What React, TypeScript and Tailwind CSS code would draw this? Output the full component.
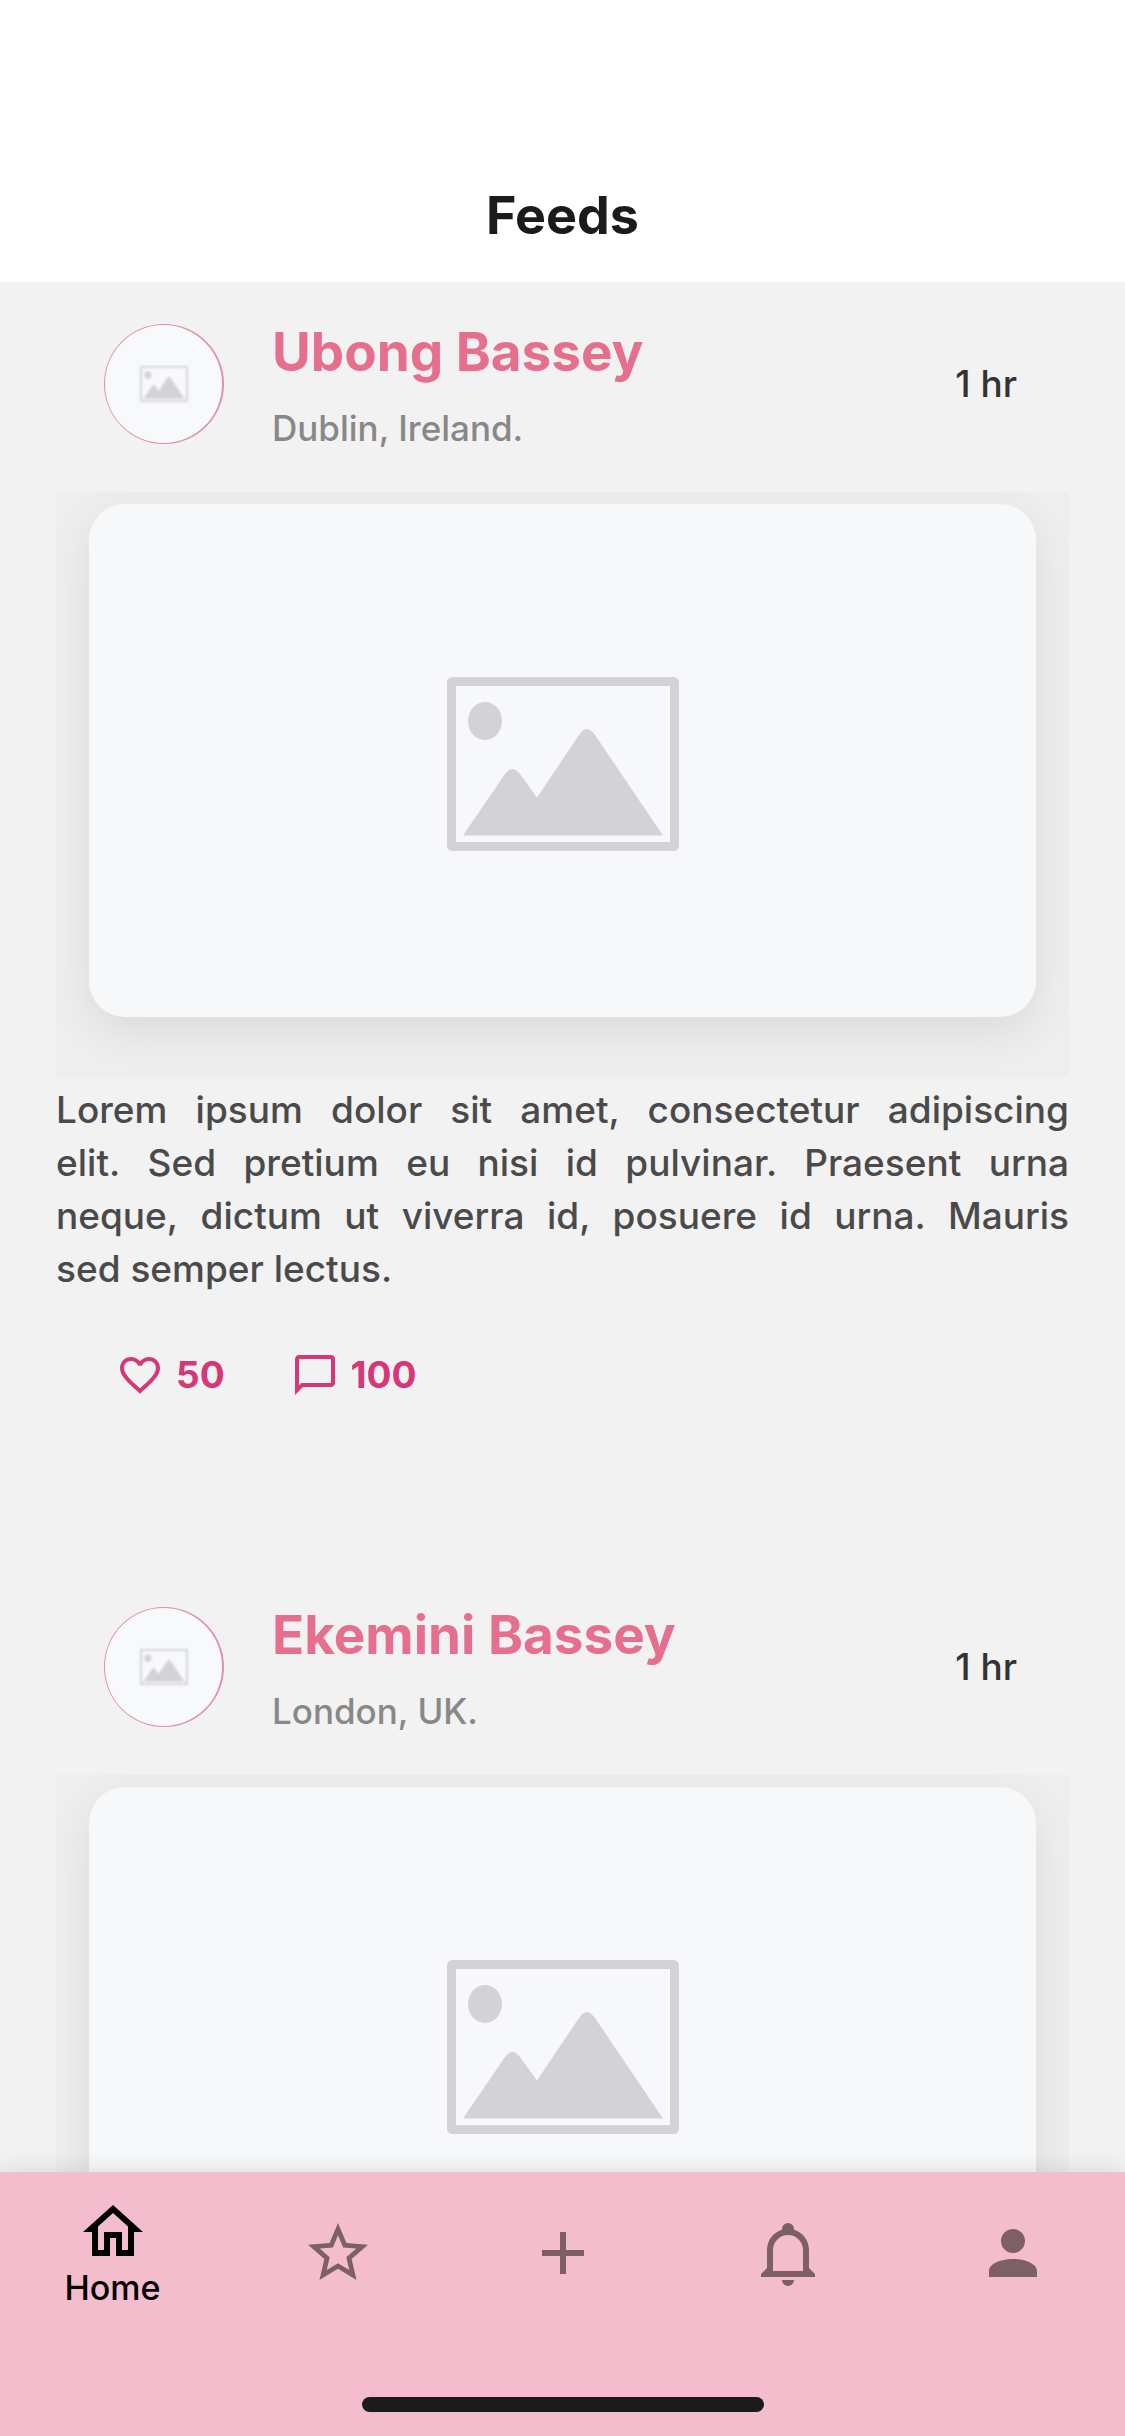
import React from "react";

type Post = {
  name: string;
  place: string;
  time: string;
  text?: string;
  likes?: number;
  comments?: number;
};

const POSTS: Post[] = [
  {
    name: "Ubong Bassey",
    place: "Dublin, Ireland.",
    time: "1 hr",
    text: "Lorem ipsum dolor sit amet, consectetur adipiscing elit.\u00a0Sed pretium eu nisi id pulvinar. Praesent urna neque,\u00a0dictum ut viverra id, posuere id urna. Mauris sed\u00a0semper\u00a0lectus.",
    likes: 50,
    comments: 100,
  },
  { name: "Ekemini Bassey", place: "London, UK.", time: "1 hr" },
];

const ICONS = {
  heart:
    "M12.1 18.55l-.1.1-.11-.1C7.14 14.24 4 11.39 4 8.5 4 6.5 5.5 5 7.5 5c1.54 0 3.04 1 3.57 2.36h1.86C13.46 6 14.96 5 16.5 5c2 0 3.5 1.5 3.5 3.5 0 2.89-3.14 5.74-7.9 10.05M16.5 3c-1.74 0-3.41.81-4.5 2.08C10.91 3.81 9.24 3 7.5 3 4.42 3 2 5.41 2 8.5c0 3.77 3.4 6.86 8.55 11.53L12 21.35l1.45-1.32C18.6 15.36 22 12.27 22 8.5 22 5.41 19.58 3 16.5 3z",
  comment:
    "M20 2H4c-1.1 0-2 .9-2 2v18l4-4h14c1.1 0 2-.9 2-2V4c0-1.1-.9-2-2-2m0 14H5.17L4 17.17V4h16v12z",
  home: "M12 5.69L17 10.19V18H15V12H9V18H7V10.19L12 5.69M12 3L2 12H5V20H11V14H13V20H19V12H22",
  star: "M12 15.39L8.24 17.66L9.23 13.38L5.91 10.5L10.29 10.13L12 6.09L13.71 10.13L18.09 10.5L14.77 13.38L15.76 17.66M22 9.24L14.81 8.63L12 2L9.19 8.63L2 9.24L7.45 13.97L5.82 21L12 17.27L18.18 21L16.54 13.97L22 9.24Z",
  plus: "M19 13H13V19H11V13H5V11H11V5H13V11H19V13Z",
  bell: "M10 21H14A2 2 0 0 1 12 23A2 2 0 0 1 10 21M21 19V20H3V19L5 17V11C5 7.9 7.03 5.17 10 4.29C10 4.19 10 4.1 10 4A2 2 0 0 1 12 2A2 2 0 0 1 14 4C14 4.1 14 4.19 14 4.29C16.97 5.17 19 7.9 19 11V17L21 19M17 11A5 5 0 0 0 12 6A5 5 0 0 0 7 11V18H17V11Z",
  account:
    "M12 4A4 4 0 0 1 16 8A4 4 0 0 1 12 12A4 4 0 0 1 8 8A4 4 0 0 1 12 4M12 14C16.42 14 20 15.79 20 18V20H4V18C4 15.79 7.58 14 12 14Z",
};

function Icon({ path, className }: { path: string; className: string }) {
  return (
    <svg viewBox="0 0 24 24" fill="currentColor" fillRule="evenodd" aria-hidden="true" className={className}>
      <path d={path} />
    </svg>
  );
}

function Placeholder({ className }: { className: string }) {
  return (
    <svg viewBox="0 0 232 174" aria-hidden="true" className={className}>
      <rect x="4.5" y="4.5" width="223" height="165" rx="1" fill="none" stroke="#d3d3d5" strokeWidth="9" />
      <ellipse cx="38" cy="44" rx="17" ry="19" fill="#d3d3d5" />
      <path
        d="M16 158.500L58 97Q65 87 73 97L90 120.500L132 58Q139.500 46 148 58L216 158.500Z"
        fill="#d3d3d5"
      />
    </svg>
  );
}

function FeedPost({ post }: { post: Post }) {
  return (
    <article className="px-14 pt-[38px] pb-[166px]">
      <header className="flex items-center pr-[52px] pl-12">
        <div className="size-[120px] shrink-0 rounded-full bg-[#e08db4] py-px pr-0.5 pl-px">
          <div className="flex size-full items-center justify-center rounded-full bg-[#f7f9fb]">
            <Placeholder className="w-12 blur-[1px]" />
          </div>
        </div>
        <div className="ml-12 flex flex-1 flex-col gap-6">
          <h2 className="text-[53px] leading-[64px] font-bold text-[#e66f8e]">{post.name}</h2>
          <p className="text-[35px] leading-[40px] font-medium text-[#888888]">{post.place}</p>
        </div>
        <time className="text-[37px] leading-[48px] font-medium text-[#333333]">{post.time}</time>
      </header>

      <div className="mt-11 overflow-hidden bg-[#eeeeee] px-[33px] pt-3 pb-[60px]">
        <div
          role="img"
          aria-label={"Photo by " + post.name}
          className="flex h-[513px] items-center justify-center rounded-[36px] bg-[#f7f8fa] pt-[6px] shadow-[0_15px_45px_rgba(0,0,0,0.08)]"
        >
          <Placeholder className="w-[232px]" />
        </div>
      </div>

      {post.text && (
        <p className="mt-[6px] text-justify text-[37px] leading-[53px] font-medium text-[#4a4a4a]">{post.text}</p>
      )}

      {post.likes !== undefined && (
        <div className="mt-14 flex gap-[66px] pl-[60px] text-[37px] leading-[48px] font-bold text-[#d63777]">
          <button type="button" aria-label="Like" className="flex items-center gap-3">
            <Icon path={ICONS.heart} className="size-12" />
            <span>{post.likes}</span>
          </button>
          <button type="button" aria-label="Comment" className="flex items-center gap-3">
            <Icon path={ICONS.comment} className="size-12" />
            <span>{post.comments}</span>
          </button>
        </div>
      )}
    </article>
  );
}

const TABS = [
  { label: "Favourites", path: ICONS.star },
  { label: "Add", path: ICONS.plus },
  { label: "Notifications", path: ICONS.bell },
  { label: "Profile", path: ICONS.account },
];

export default function App() {
  return (
    <div className="flex h-screen flex-col bg-[#f2f2f2] font-[Inter,sans-serif]">
      <header className="bg-white pt-[186px] pb-9">
        <h1 className="text-center text-[52px] leading-[60px] font-bold text-[#1b1b1b]">Feeds</h1>
      </header>

      <main className="min-h-0 flex-1 overflow-y-auto [scrollbar-width:none]">
        {POSTS.map((post) => (
          <FeedPost key={post.name} post={post} />
        ))}
      </main>

      <nav className="relative bg-[#f3bdcd] pb-6 shadow-[0_0_24px_rgba(0,0,0,0.12)]">
        <div className="grid grid-cols-5">
          <button type="button" aria-current="page" className="flex flex-col items-center pt-6 text-black">
            <Icon path={ICONS.home} className="size-[72px]" />
            <span className="text-[34px] leading-[40px] font-medium">Home</span>
          </button>
          {TABS.map((tab) => (
            <button key={tab.label} type="button" aria-label={tab.label} className="flex justify-center pt-[45px] text-[#7d6066]">
              <Icon path={tab.path} className="size-[72px]" />
            </button>
          ))}
        </div>
        <div className="mx-auto mt-[89px] h-[15px] w-[402px] rounded-full bg-[#1b1b1b]" />
      </nav>
    </div>
  );
}
